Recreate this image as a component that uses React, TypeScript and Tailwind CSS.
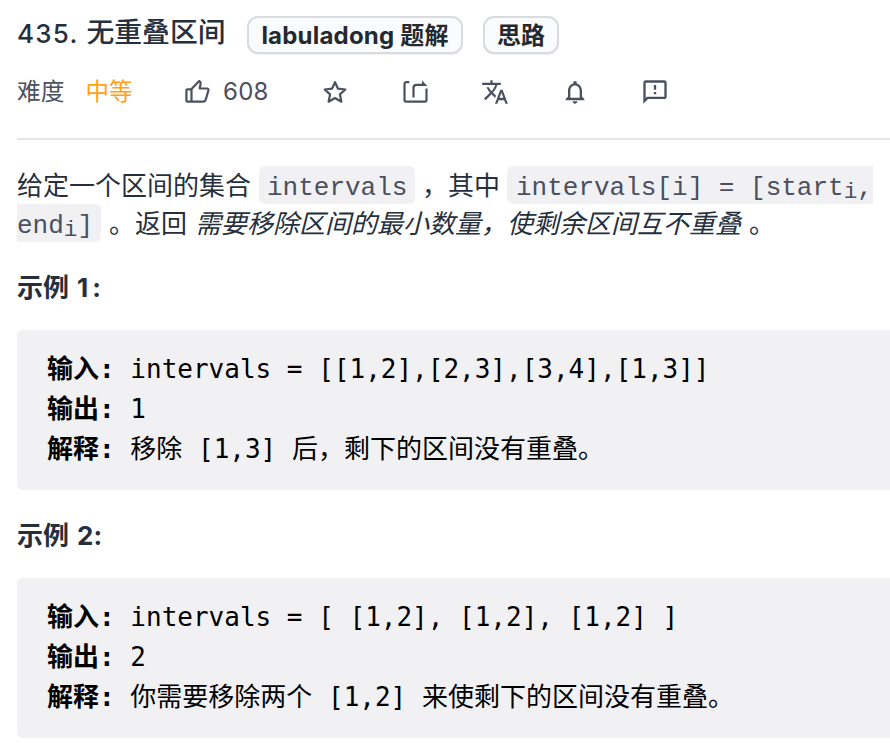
import type { ReactNode } from "react";
import { MdTranslate, MdNotificationsNone, MdOutlineFeedback } from "react-icons/md";

function ThumbIcon() {
  return (
    <svg width="28" height="28" viewBox="0 0 28 28" fill="none" stroke="currentColor" strokeWidth="2.2" strokeLinejoin="round">
      <path d="M8.500 11.300H4.600a1.200 1.200 0 0 0-1.200 1.200v10a1.200 1.200 0 0 0 1.200 1.200h3.900M8.500 11L16.200 3c1.200.6 1.600 1.500 1.400 2.600l-.9 4.900h7.600c1 .2 1.400 1 1.100 2l-2.600 9c-.4 1.500-1.200 2.200-2.500 2.200H8.500z" />
    </svg>
  );
}

function StarIcon() {
  return (
    <svg width="28" height="28" viewBox="0 0 28 28" fill="none" stroke="currentColor" strokeWidth="2.2" strokeLinejoin="round">
      <path d="M14 4.200l3 6.500 7.300.8-5.400 4.900 1.500 7.300L14 20l-6.400 3.700 1.500-7.300-5.400-4.900 7.300-.8z" />
    </svg>
  );
}

function ShareIcon() {
  return (
    <svg width="28" height="28" viewBox="0 0 28 28" fill="none" stroke="currentColor" strokeWidth="2.2">
      <path d="M8.300 4.200H5.200a1.700 1.700 0 0 0-1.700 1.700v16.400a1.400 1.400 0 0 0 1.400 1.400h19.200a1.400 1.400 0 0 0 1.400-1.400V10.500" />
      <path d="M12.500 19.500V9.800a3 3 0 0 1 3-3h7" />
      <path d="M21 2.500l5.400 5.400H21z" fill="currentColor" stroke="none" />
    </svg>
  );
}

function Tag({ children, className }: { children: ReactNode; className: string }) {
  return (
    <span className={`flex h-[38px] items-center justify-center rounded-[11px] border-2 border-[#d9dbde] bg-[#fafbfd] pt-px text-2xl font-bold whitespace-nowrap text-[#24292f] shadow-[0_1px_1px_rgba(0,0,0,0.05)] ${className}`}>
      {children}
    </span>
  );
}

function Code({ children, className }: { children: ReactNode; className: string }) {
  return (
    <code className={`inline-flex h-[38px] items-center bg-[#f1f1f4] pt-[5px] font-['Liberation_Mono',monospace] whitespace-pre text-[#4a505f] ${className}`}>
      {children}
    </code>
  );
}

function Sub() {
  return <span className="mt-[9px] w-[13.7px] text-[22.7px]">i</span>;
}

function Example({ title, number, rows }: { title: string; number: string; rows: [string, string][] }) {
  return (
    <section>
      <h2 className="flex h-[38px] pt-px text-[26px] leading-[38px] font-bold">
        <span className="w-[60px]">{title}</span>
        <span className="flex w-6 justify-between">
          <span>{number}</span>
          <span>:</span>
        </span>
      </h2>
      <div className="mt-6 h-[160px] rounded-l-md bg-[#f1f1f4] pt-[19px] pl-[30px] font-['DejaVu_Sans_Mono','Noto_Sans_CJK_SC',monospace] text-[26px] leading-10 text-black">
        {rows.map(([label, value]) => (
          <div key={label} className="h-10 whitespace-pre">
            <b>{label}:</b> {value}
          </div>
        ))}
      </div>
    </section>
  );
}

export default function App() {
  return (
    <main className="h-[750px] w-[890px] overflow-hidden bg-white pl-[17px] font-['Inter','Noto_Sans_CJK_SC',sans-serif] text-[#262f3d] [text-spacing-trim:space-all]">
      <header className="flex h-[70px] pt-4">
        <h1 className="flex h-[34px] w-[230px] items-center text-[27.8px] font-medium whitespace-nowrap">
          <span className="w-[69.5px] text-[26px] tracking-[1.2px]">435.</span>无重叠区间
        </h1>
        <Tag className="w-[216px] tracking-[0.2px]">labuladong 题解</Tag>
        <Tag className="ml-5 w-[76px]">思路</Tag>
      </header>
      <div className="flex h-11 items-center text-2xl text-[#4a505f]">
        <span className="w-[68.5px] text-[23.7px]">难度</span>
        <span className="w-[97.5px] text-[23.5px] text-[#ffa119]">中等</span>
        <ThumbIcon />
        <span className="ml-3 w-[98px] tracking-[0.3px]">608</span>
        <StarIcon />
        <span className="ml-[52px]"><ShareIcon /></span>
        <MdTranslate size={28} className="ml-[52px]" />
        <MdNotificationsNone size={28} className="ml-[52px]" />
        <MdOutlineFeedback size={28} className="ml-[52px]" />
      </div>
      <hr className="mt-6 border-t-2 border-[#e3e5e9]" />
      <div className="mt-[26px] text-[26px] leading-[38px]">
        <p className="flex h-[38px] whitespace-nowrap">
          <span className="w-[242px] pt-px">给定一个区间的集合</span>
          <Code className="w-[156px] rounded-md px-2">intervals</Code>
          <span className="ml-[7px] w-[85px] pt-px">，其中</span>
          <Code className="w-[366px] rounded-l-md pl-[9px]">intervals[i] = [start<Sub />,</Code>
        </p>
        <p className="flex h-[38px] whitespace-nowrap">
          <Code className="w-[84px] rounded-r-md">end<Sub />]</Code>
          <span className="ml-2 w-[86px] pt-px">。返回</span>
          <em className="w-[554px] pt-px">需要移除区间的最小数量，使剩余区间互不重叠</em>
          <span className="pt-px">。</span>
        </p>
      </div>
      <div className="mt-[26px] flex flex-col gap-[26px]">
        <Example
          title="示例"
          number="1"
          rows={[
            ["输入", "intervals = [[1,2],[2,3],[3,4],[1,3]]"],
            ["输出", "1"],
            ["解释", "移除 [1,3] 后，剩下的区间没有重叠。"],
          ]}
        />
        <Example
          title="示例"
          number="2"
          rows={[
            ["输入", "intervals = [ [1,2], [1,2], [1,2] ]"],
            ["输出", "2"],
            ["解释", "你需要移除两个 [1,2] 来使剩下的区间没有重叠。"],
          ]}
        />
      </div>
    </main>
  );
}
